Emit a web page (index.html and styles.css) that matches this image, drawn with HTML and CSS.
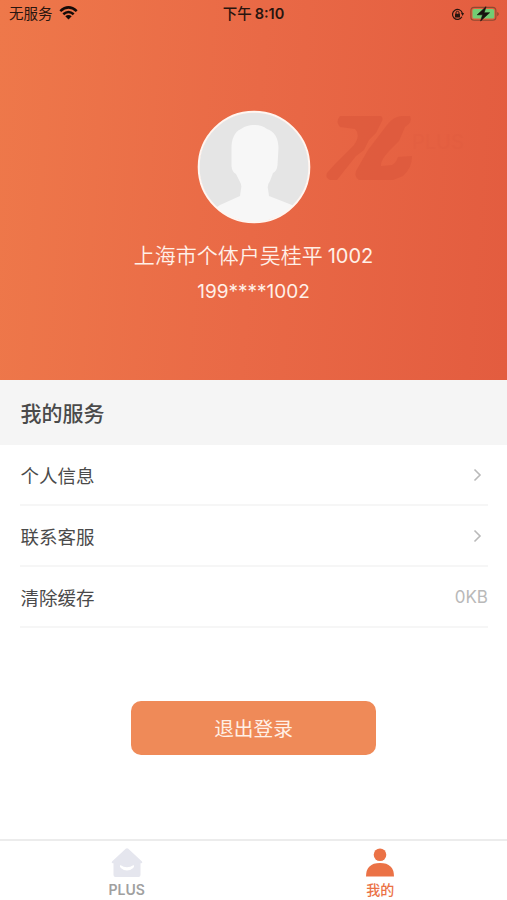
FILE: index.html
```html
<!DOCTYPE html>
<html lang="zh-CN">
<head>
<meta charset="utf-8">
<title>我的</title>
<link rel="stylesheet" href="styles.css">
</head>
<body>
<div class="app">
  <header class="hero">
    <div class="status">
      <div class="status-left"><span>无服务</span>
        <svg class="wifi" width="19" height="14" viewBox="0 0 19 14"><path d="M1.3 5.1Q9.5-2.2 17.7 5.1M4.3 8.2Q9.5 3.8 14.7 8.2" fill="none" stroke="currentColor" stroke-width="2.6"/><path d="M6.3 10.3Q9.5 7.7 12.7 10.3L9.5 13.6Z" fill="currentColor"/></svg>
      </div>
      <div class="status-time">下午<b>8:10</b></div>
      <div class="status-right">
        <svg width="13" height="13" viewBox="0 0 13 13"><path d="M10.9 8.8A5 5 0 1 1 11.3 5" fill="none" stroke="currentColor" stroke-width="1.2"/><path d="M10 5h3l-1.3 3z" fill="currentColor"/><rect x="4" y="5.8" width="5" height="3.6" rx=".5" fill="currentColor"/><path d="M5 6V4.8a1.5 1.5 0 0 1 3 0V6" fill="none" stroke="currentColor"/></svg>
        <svg width="30" height="16" viewBox="0 0 30 16"><rect x=".9" y="1.4" width="25" height="12.8" rx="3.3" fill="none" stroke="#8f4930" stroke-width="1.1"/><rect x="2.5" y="3" width="21.8" height="9.6" rx="1.7" fill="#72cd73"/><path d="M27.2 6v4.2q1.6-.5 1.6-2.1T27.2 6" fill="#8f4930"/><path d="M16 .7 7.200 8.800h5.400l-2 6.200 9-8.300h-5.400z" fill="#17120f" stroke="#17120f" stroke-width=".6"/></svg>
      </div>
    </div>
    <svg class="mark" width="145" height="70" viewBox="0 0 145 70"><path d="M14 1H55Q58 3 55 8L50 18 43 25 38 35 30 41 11 65H4Q-1 63 1 58L9 49 28 30Q35 20 29 14L14 12Q9 7 14 1Z"/><path d="M75 1H84Q87 7 79 12L73 26 63 36Q54 46 55 51L66 50Q70 48 72 42L86 41Q86 53 77 61L67 65H33Q28 62 30 56L42 35 61 10Q67 2 75 1Z"/><text x="86" y="34">PLUS</text></svg>
    <svg class="avatar" width="114" height="114" viewBox="0 0 114 114"><defs><clipPath id="disc"><circle cx="57" cy="57" r="55"/></clipPath></defs><circle cx="57" cy="57" r="55" fill="#e5e5e5"/><path clip-path="url(#disc)" fill="#f7f7f7" d="M58 15C51 15 47 17 44 19C37 22 34.500 30 34.500 38V56Q35 62 39 64L43 72Q45 75 44 79L43 86 23 95 10 104V114H105V104L95 95 72 86 71 79Q70 75 73 71L76 63Q80 61 80.500 55L81.500 38C81.500 28 77 21 70 19Q65 15 58 15Z"/><circle cx="57" cy="57" r="55.300" fill="none" stroke="#fff6f1" stroke-width="2"/></svg>
    <div class="name">上海市个体户吴桂平<span>1002</span></div>
    <div class="phone">199****1002</div>
  </header>
  <h2 class="section">我的服务</h2>
  <main class="list">
    <div class="row"><span>个人信息</span><svg class="chevron" width="9" height="14" viewBox="0 0 9 14"><path d="M1.500 1.500 7 7l-5.500 5.500"/></svg></div>
    <div class="row"><span>联系客服</span><svg class="chevron" width="9" height="14" viewBox="0 0 9 14"><path d="M1.500 1.500 7 7l-5.500 5.500"/></svg></div>
    <div class="row"><span>清除缓存</span><span class="size">0KB</span></div>
  </main>
  <button class="logout">退出登录</button>
  <nav class="tabs">
    <div class="tab"><svg width="32" height="30" viewBox="0 0 32 30"><path d="M14.700.7Q16 0 17.300.7L31 13.500q1 1.500-.7 1.700H29.500V27q0 2-2 2h-23q-2 0-2-2V15.200H1.700Q0 15 1 13.500Z" fill="#e5e6ee"/><path d="M9.300 17q6.700 4.500 13.400 0 1 1.500-.5 3-6.200 5-12.400 0-1.500-1.500-.5-3Z" fill="#fff"/></svg><span>PLUS</span></div>
    <div class="tab active"><svg width="32" height="30" viewBox="0 0 32 30"><circle cx="16" cy="6.800" r="6.300"/><path d="M2 28.500Q2 15 16 15T30 28.500Z"/></svg><span>我的</span></div>
  </nav>
</div>
</body>
</html>
```
FILE: styles.css
```css
* { box-sizing: border-box; }
body {
  margin: 0;
  background: #fff;
  color: #4a4a4a;
  font-family: Inter, "Noto Sans CJK SC", sans-serif;
}
.app { display: flex; flex-direction: column; height: 900px; width: 507px; }
.hero {
  position: relative;
  display: flex;
  flex-direction: column;
  align-items: center;
  height: 380px;
  background: linear-gradient(94deg, #ee784a 0%, #e96946 50%, #e35c3f 100%);
}
.status {
  display: grid;
  grid-template-columns: 1fr auto 1fr;
  align-items: center;
  width: 100%;
  height: 28px;
  padding: 0 7px 0 9px;
  color: #28150f;
  font-size: 14.5px;
  line-height: 20px;
}
.status-left, .status-right { display: flex; align-items: center; }
.status-left { gap: 6px; }
.wifi { color: #140b08; margin-top: -2px; }
.status-time { margin-right: 2px; font-weight: 500; }
.status-time b { margin-left: 3px; font-size: 14.5px; font-weight: 600; }
.status-right { justify-content: flex-end; gap: 6px; }
.mark { position: absolute; left: 326px; top: 115px; fill: #dc583c; opacity: .65; }
.mark text { font-size: 20px; opacity: .15; }
.avatar { margin-top: 82px; }
.name {
  display: flex;
  align-items: center;
  gap: 5px;
  height: 30px;
  margin-top: 17px;
  color: #fff0e8;
  font-size: 21px;
  font-weight: 350;
  line-height: 30px;
}
.name span { font-size: 20px; font-weight: 400; }
.phone { height: 30px; margin-top: 6px; color: #fff0e8; font-size: 19px; line-height: 30px; }
.section {
  height: 65px;
  margin: 0;
  padding-left: 20.5px;
  background: #f5f5f5;
  font-size: 21px;
  font-weight: 500;
  line-height: 67px;
}
.list { padding: 0 19px 0 20px; }
.row {
  display: flex;
  align-items: center;
  justify-content: space-between;
  height: 61px;
  padding-left: .5px;
  border-bottom: 2px solid #f6f6f6;
  font-size: 18.5px;
}
.chevron { margin-right: 6px; fill: none; stroke: #b9b9b9; stroke-width: 1.6; }
.size { color: #b9b9b9; font-size: 17px; }
.logout {
  width: 245px;
  height: 54px;
  margin: 73px 0 0 131px;
  padding: 2px 0 0;
  border: 0;
  border-radius: 10px;
  background: #ef8a58;
  color: #fff0e6;
  font: 19.7px/52px Inter, "Noto Sans CJK SC", sans-serif;
}
.tabs {
  display: grid;
  grid-template-columns: 1fr 1fr;
  height: 61px;
  margin-top: auto;
  border-top: 2px solid #ececec;
}
.tab {
  display: flex;
  flex-direction: column;
  align-items: center;
  padding-top: 7px;
  color: #a0a0a0;
  font-size: 14px;
  font-weight: 600;
  line-height: 24px;
}
.tab.active { color: #eb7246; fill: #eb7246; font-weight: 500; }
```
